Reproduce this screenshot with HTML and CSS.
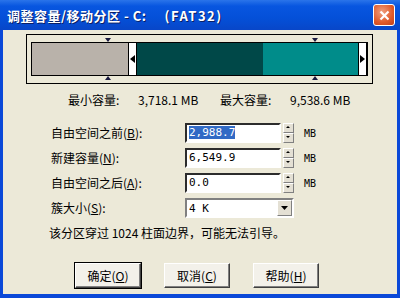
FILE: index.html
```html
<!DOCTYPE html>
<html lang="zh-CN">
<head>
  <meta charset="UTF-8" />
  <title>调整容量/移动分区</title>
  <link rel="stylesheet" href="styles.css">
</head>
<body>

<div class="window">
  <div class="titlebar">
    <span class="title">调整容量/移动分区 - C:<span class="fs">(FAT32)</span></span>
    <span class="close">
      <svg width="11" height="11" viewBox="0 0 11 11"><path d="M1.5 1.5 L9.5 9.5 M9.5 1.5 L1.5 9.5" stroke="#fff" stroke-width="2.2"/></svg>
    </span>
  </div>

  <div class="client">
    <div class="map">
      <div class="bar">
        <div class="seg free" style="width:96px"></div>
        <div class="handle left">
          <svg width="5" height="8" viewBox="0 0 5 8"><path d="M5 0 L0 4 L5 8 Z" fill="#000"/></svg>
        </div>
        <div class="seg used" style="width:126px"></div>
        <div class="seg rest" style="width:100px"></div>
        <div class="handle right">
          <svg width="5" height="8" viewBox="0 0 5 8"><path d="M0 0 L5 4 L0 8 Z" fill="#000"/></svg>
        </div>
      </div>
      <span class="mark top" style="left:78px"></span>
      <span class="mark bottom" style="left:78px"></span>
      <span class="mark top" style="left:285px"></span>
      <span class="mark bottom" style="left:285px"></span>
    </div>

    <div class="limits">
      <span class="lbl">最小容量:</span><span class="val">3,718.1 MB</span>
      <span class="lbl gap">最大容量:</span><span class="val">9,538.6 MB</span>
    </div>

    <div class="form">
      <label>自由空间之前(<u>B</u>):</label>
      <div class="field"><span class="sel">2,988.7</span></div>
      <div class="spin"><span class="up"></span><span class="down"></span></div>
      <span class="unit">MB</span>

      <label>新建容量(<u>N</u>):</label>
      <div class="field">6,549.9</div>
      <div class="spin"><span class="up"></span><span class="down"></span></div>
      <span class="unit">MB</span>

      <label>自由空间之后(<u>A</u>):</label>
      <div class="field">0.0</div>
      <div class="spin"><span class="up"></span><span class="down"></span></div>
      <span class="unit">MB</span>

      <label>簇大小(<u>S</u>):</label>
      <div class="combo">
        <span>4 K</span>
        <span class="drop"><svg width="7" height="4" viewBox="0 0 7 4"><path d="M0 0 H7 L3.5 4 Z" fill="#000"/></svg></span>
      </div>
    </div>

    <p class="note">该分区穿过 1024 柱面边界，可能无法引导。</p>

    <div class="buttons">
      <button>确定(<u>O</u>)</button>
      <button>取消(<u>C</u>)</button>
      <button>帮助(<u>H</u>)</button>
    </div>
  </div>
</div>

</body>
</html>
```

FILE: styles.css
```css
body { margin: 0; font-family: "Noto Sans CJK SC", "DejaVu Sans", sans-serif; font-size: 12px; }
.window { width: 400px; height: 298px; display: flex; flex-direction: column; background: #0a48d8; }
.titlebar { height: 30px; display: flex; align-items: center; justify-content: space-between; padding: 0 5px 0 7px;
  background: linear-gradient(#2a74ea 0%, #0856e0 20%, #0450d8 60%, #0846c8 100%); }
.title { color: #fff; font-weight: bold; font-size: 13px; letter-spacing: 0.5px; text-shadow: 1px 1px 0 #0a1f66; }
.title .fs { margin-left: 18px; letter-spacing: 1.5px; }
.close { width: 20px; height: 20px; border: 1px solid #fff; border-radius: 3px; display: flex; align-items: center; justify-content: center;
  background: radial-gradient(circle at 40% 35%, #f0a080, #e05a2a 60%, #c0401a); }

.client { flex: 1; margin: 0 3px 4px 3px; background: #ece9d8; display: flex; flex-direction: column; }

.map { position: relative; margin: 4px 0 0 23px; width: 345px; height: 48px; border: 1px solid #000; display: flex; align-items: center; justify-content: center; }
.bar { display: flex; height: 32px; border: 1px solid #000; width: 335px; }
.seg { height: 100%; }
.free { background: #b9b2aa; }
.used { background: #004848; }
.rest { background: #008c8a; flex: 1; }
.handle { width: 7px; background: #fff; border-left: 1px solid #000; border-right: 1px solid #000; display: flex; align-items: center; justify-content: center; }
.mark { position: absolute; width: 0; height: 0; border-left: 3px solid transparent; border-right: 3px solid transparent; }
.mark.top { top: 3px; border-top: 4px solid #1a1a40; }
.mark.bottom { bottom: 3px; border-bottom: 4px solid #1a1a40; }

.limits { display: flex; margin: 7px 0 0 65px; height: 16px; align-items: center; }
.lbl { width: 70px; }
.lbl.gap { margin-left: 8px; }
.val { width: 74px; }

.form { display: grid; grid-template-columns: 132px 96px 11px auto; column-gap: 2px; row-gap: 5px; margin: 16px 0 0 48px; align-items: center; }
.form label { height: 20px; line-height: 20px; }
.field { height: 20px; box-sizing: border-box; border: 2px inset #fff; border-color: #808080 #fff #fff #808080; background: #fff; padding: 0 2px; line-height: 16px; font-family: "DejaVu Sans Mono", monospace; font-size: 11px; }
.sel { background: #316ac5; color: #fff; }
.spin { height: 20px; display: flex; flex-direction: column; }
.spin span { flex: 1; background: #e4e0d4; border: 1px solid; border-color: #fff #808080 #808080 #fff; position: relative; }
.spin .up::after, .spin .down::after { content: ""; position: absolute; left: 2px; top: 2px; border-left: 2px solid transparent; border-right: 2px solid transparent; }
.spin .up::after { border-bottom: 2px solid #000; }
.spin .down::after { border-top: 2px solid #000; }
.unit { margin-left: 8px; font-family: "DejaVu Sans Mono", monospace; font-size: 10px; }
.combo { grid-column: 2 / span 2; height: 20px; box-sizing: border-box; border: 2px solid; border-color: #808080 #fff #fff #808080; background: #fff; display: flex; justify-content: space-between; align-items: center; padding-left: 2px; font-family: "DejaVu Sans Mono", monospace; font-size: 11px; }
.drop { width: 15px; height: 16px; background: #e4e0d4; border: 1px solid; border-color: #fff #808080 #808080 #fff; box-sizing: border-box; display: flex; align-items: center; justify-content: center; }

.note { margin: 7px 0 0 46px; height: 16px; line-height: 16px; }
.buttons { display: flex; gap: 23px; margin: 22px 0 0 72px; }
button { width: 66px; height: 25px; font-family: inherit; font-size: 12px; background: #f3f1ea; border: 1px solid; border-color: #fff #404040 #404040 #fff; box-shadow: inset -1px -1px 0 #808080; padding: 0; }
button:first-child { outline: 1px solid #000; }
```
